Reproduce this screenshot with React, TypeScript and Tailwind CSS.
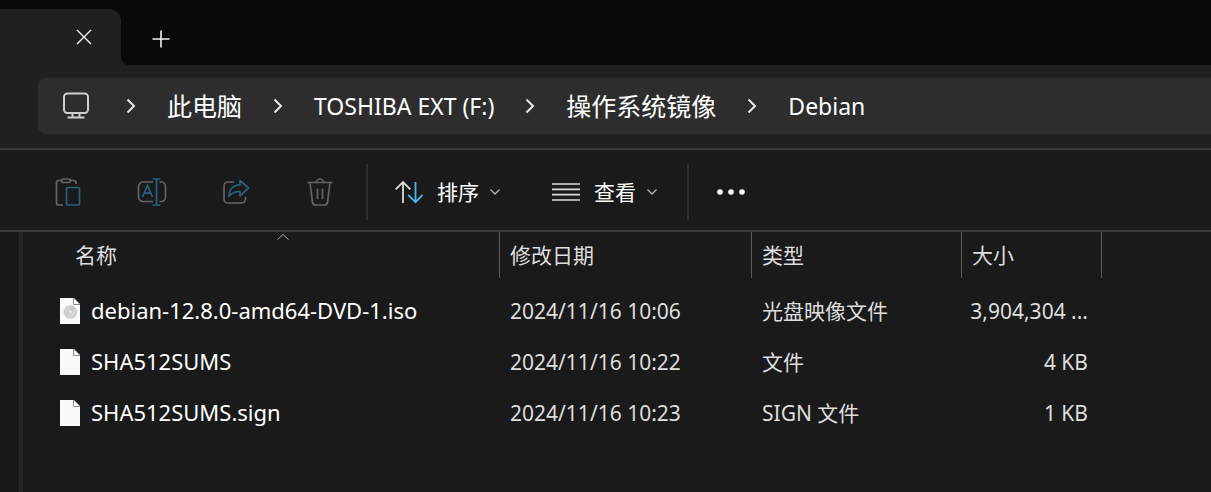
import type { ReactNode } from "react";

const LATIN_CJK = "font-['Noto_Sans','Noto_Sans_CJK_SC',sans-serif]";

function CloseIcon() {
  return (
    <svg width="16" height="16" viewBox="0 0 16 16" fill="none" stroke="#f5f5f5" strokeWidth="1.4">
      <path d="M1 1 15 15M15 1 1 15" />
    </svg>
  );
}

function PlusIcon() {
  return (
    <svg width="18" height="18" viewBox="0 0 18 18" fill="none" stroke="#f0f0f0" strokeWidth="1.6">
      <path d="M9 0.5V17.5M0.5 9H17.5" />
    </svg>
  );
}

function MonitorIcon() {
  return (
    <svg width="28" height="28" viewBox="0 0 28 28" fill="none" stroke="#cfcfcf" strokeWidth="2">
      <rect x="2" y="1.5" width="24" height="19.5" rx="3.5" />
      <path d="M10.5 21V25.5M17.5 21V25.5M5.5 25.5H22.5" />
    </svg>
  );
}

function ChevronRight() {
  return (
    <svg className="shrink-0" width="10" height="16" viewBox="0 0 10 16" fill="none" stroke="#e8e8e8" strokeWidth="2">
      <path d="M1.5 1.5 8 8 1.5 14.5" />
    </svg>
  );
}

function ChevronDown() {
  return (
    <svg width="10" height="6" viewBox="0 0 10 6" fill="none" stroke="#b4b4b4" strokeWidth="1.3">
      <path d="M0.5 0.5 5 5 9.5 0.5" />
    </svg>
  );
}

function PasteIcon() {
  return (
    <svg width="28" height="30" viewBox="0 0 28 30" fill="none" strokeWidth="1.7">
      <path d="M9 28H4.500A2 2 0 0 1 2.500 26V5.500A2 2 0 0 1 4.500 3.500H7.500M16.500 3.500H20A2 2 0 0 1 22 5.500V7" stroke="#656565" />
      <rect x="7.5" y="2" width="9" height="3.5" rx="1.7" stroke="#656565" />
      <rect x="12.5" y="10.5" width="13" height="17.5" rx="1.5" stroke="#28627f" />
    </svg>
  );
}

function RenameIcon() {
  return (
    <svg width="30" height="30" viewBox="0 0 30 30" fill="none" strokeWidth="1.7">
      <path d="M16 24.500H6A4.500 4.500 0 0 1 1.500 20V9.500A4.500 4.500 0 0 1 6 5H16M22.500 5H24A4.500 4.500 0 0 1 28.500 9.500V20A4.500 4.500 0 0 1 24 24.500H22.500" stroke="#656565" />
      <path d="M15.500 2H23.500M15.500 28H23.500M19.500 2V28" stroke="#28627f" />
      <path d="M5.500 20 10.500 8.500 15.500 20M7.200 16.200H13.800" stroke="#28627f" />
    </svg>
  );
}

function ShareIcon() {
  return (
    <svg width="28" height="30" viewBox="0 0 28 30" fill="none" strokeWidth="1.7" strokeLinejoin="round">
      <path d="M12 5H6A4 4 0 0 0 2 9V22A4 4 0 0 0 6 26H19.500A4 4 0 0 0 23.500 22V20" stroke="#656565" />
      <path d="M18 3.500 26.500 11 18 18.800V14.500C12.500 14.500 9.500 16 7 19.500C7 12.500 11 8 18 7.800Z" stroke="#28627f" />
    </svg>
  );
}

function TrashIcon() {
  return (
    <svg width="28" height="30" viewBox="0 0 28 30" fill="none" stroke="#656565" strokeWidth="1.7">
      <path d="M1.500 5.500H26.500M10.500 5.500A3.500 3.500 0 0 1 17.500 5.500M4 5.500 6.500 25.500A3 3 0 0 0 9.400 28H18.600A3 3 0 0 0 21.500 25.500L24 5.500M11.500 11.500V22M16.500 11.500V22" />
    </svg>
  );
}

function SortIcon() {
  return (
    <svg width="28" height="24" viewBox="0 0 28 24" fill="none" strokeWidth="1.8">
      <path d="M8 23V2M0.700 9.300 8 2 15.300 9.300" stroke="#dcdcdc" />
      <path d="M20.500 2V22M13.200 14.900 20.500 22.200 27.500 14.900" stroke="#4cb4ee" />
    </svg>
  );
}

function LinesIcon() {
  return (
    <svg width="28" height="20" viewBox="0 0 28 20" fill="none" stroke="#dcdcdc" strokeWidth="1.7">
      <path d="M0 2H28M0 7.300H28M0 12.700H28M0 18H28" />
    </svg>
  );
}

function DotsIcon() {
  return (
    <svg width="28" height="6" viewBox="0 0 28 6" fill="#ffffff">
      <circle cx="3" cy="3" r="2.8" />
      <circle cx="14" cy="3" r="2.8" />
      <circle cx="25" cy="3" r="2.8" />
    </svg>
  );
}

function FileIcon({ disc }: { disc: boolean }) {
  return (
    <svg className="shrink-0" width="20" height="26" viewBox="0 0 20 26">
      <defs>
        <linearGradient id="disc-sheen" x1="0" y1="0" x2="1" y2="1">
          <stop offset="0" stopColor="#dfe3e2" />
          <stop offset="0.45" stopColor="#c6cbca" />
          <stop offset="0.7" stopColor="#d6dcda" />
          <stop offset="1" stopColor="#a9afad" />
        </linearGradient>
      </defs>
      <path d="M0 0H14L20 6V26H0Z" fill="#fafafa" />
      <path d="M13.500 0V6.500H20" fill="#ffffff" stroke="#8c8c8c" strokeWidth="1" />
      <path d="M14.200 0H20V5.800Z" fill="#1a1a1a" />
      <path d="M13.500 0 20 6.500" stroke="#a8a8a8" strokeWidth="0.8" />
      {disc && (
        <>
          <circle cx="10.3" cy="14" r="6.3" fill="url(#disc-sheen)" stroke="#b4b9b8" strokeWidth="0.6" />
          <circle cx="10.3" cy="13.800" r="1.6" fill="#e6e9e8" />
        </>
      )}
    </svg>
  );
}

function ToolButton({ label, children }: { label: string; children: ReactNode }) {
  return (
    <button type="button" disabled aria-label={label} className="flex h-14 w-[84px] items-center justify-center">
      {children}
    </button>
  );
}

const crumbs = [
  { label: "此电脑", size: "text-[25px]" },
  { label: "TOSHIBA EXT (F:)", size: "text-[23px]" },
  { label: "操作系统镜像", size: "text-[25px]" },
  { label: "Debian", size: "text-[23px]" },
];

const files = [
  { name: "debian-12.8.0-amd64-DVD-1.iso", date: "2024/11/16 10:06", type: "光盘映像文件", size: "3,904,304 ...", disc: true },
  { name: "SHA512SUMS", date: "2024/11/16 10:22", type: "文件", size: "4 KB", disc: false },
  { name: "SHA512SUMS.sign", date: "2024/11/16 10:23", type: "SIGN 文件", size: "1 KB", disc: false },
];

export default function App() {
  return (
    <div className={`flex min-h-screen flex-col bg-[#1a1a1a] text-white ${LATIN_CJK}`}>
      <header className="flex items-end bg-[#0a0a0a] pt-[9px]">
        <div className="relative flex h-14 w-[121px] items-center rounded-tr-xl bg-[#202020] pl-[76px]">
          <button type="button" aria-label="关闭标签页">
            <CloseIcon />
          </button>
          <svg className="absolute bottom-0 left-full" width="8" height="8" viewBox="0 0 8 8" fill="#202020">
            <path d="M0 0A8 8 0 0 0 8 8H0Z" />
          </svg>
        </div>
        <button type="button" aria-label="新建标签页" className="ml-[31px] flex h-14 items-center pt-1">
          <PlusIcon />
        </button>
      </header>

      <nav aria-label="地址栏" className="border-b-2 border-[#393939] bg-[#202020] pt-[13px] pb-3.5 pl-[38px]">
        <ol className="flex h-14 items-center gap-[31px] rounded-l-lg bg-[#2d2d2d] pl-6 leading-8">
          <li className="w-[33px]">
            <a href="#computer" aria-label="此电脑" className="block">
              <MonitorIcon />
            </a>
          </li>
          {crumbs.map((crumb) => (
            <li key={crumb.label} className="flex items-center gap-[31px] whitespace-nowrap">
              <ChevronRight />
              <a href="#folder" className={crumb.size}>{crumb.label}</a>
            </li>
          ))}
        </ol>
      </nav>

      <div role="toolbar" aria-label="工具栏" className="flex h-[82px] items-center border-b-2 border-[#393939] pt-1 pl-[26px] text-[21px]">
        <ToolButton label="粘贴"><PasteIcon /></ToolButton>
        <ToolButton label="重命名"><RenameIcon /></ToolButton>
        <ToolButton label="共享"><ShareIcon /></ToolButton>
        <ToolButton label="删除"><TrashIcon /></ToolButton>
        <div className="ml-1 h-14 w-0.5 bg-[#2d2d2d]" />
        <button type="button" className="ml-[27px] flex items-center">
          <SortIcon />
          <span className="ml-3.5 pt-0.5">排序</span>
          <span className="ml-[11px]"><ChevronDown /></span>
        </button>
        <button type="button" className="ml-[52px] flex items-center">
          <LinesIcon />
          <span className="ml-3.5 pt-0.5">查看</span>
          <span className="ml-[11px]"><ChevronDown /></span>
        </button>
        <div className="ml-[30px] h-14 w-0.5 bg-[#2d2d2d]" />
        <button type="button" aria-label="更多" className="ml-7 py-4">
          <DotsIcon />
        </button>
      </div>

      <div className="flex flex-1">
        <aside className="w-[23px] shrink-0 border-r-4 border-[#262626] bg-[#181818]" />
        <main className="min-w-0 flex-1">
          <table className="table-fixed border-separate border-spacing-0 text-left text-[21px] text-[#dedede]">
            <colgroup>
              <col className="w-[477px]" />
              <col className="w-[252px]" />
              <col className="w-[210px]" />
              <col className="w-[140px]" />
            </colgroup>
            <thead>
              <tr className="h-[46px]">
                <th className="relative border-r border-[#5c5c5c] p-0 pt-0.5 pl-[52px] font-normal">
                  名称
                  <svg className="absolute top-0.5 left-[254px]" width="12" height="6" viewBox="0 0 12 6" fill="none" stroke="#a8a8a8">
                    <path d="M0.5 5.5 6 0.5 11.5 5.5" />
                  </svg>
                </th>
                <th className="border-r border-[#5c5c5c] p-0 pt-0.5 pl-2.5 font-normal">修改日期</th>
                <th className="border-r border-[#5c5c5c] p-0 pt-0.5 pl-2.5 font-normal">类型</th>
                <th className="border-r border-[#5c5c5c] p-0 pt-0.5 pl-2.5 font-normal">大小</th>
              </tr>
            </thead>
            <tbody className="before:block before:h-2">
              {files.map((file) => (
                <tr key={file.name} className="h-[51px] whitespace-nowrap">
                  <td className="p-0 pb-0.5 pl-[37px] text-[22px] text-white">
                    <span className="flex items-center gap-[11px]">
                      <FileIcon disc={file.disc} />
                      {file.name}
                    </span>
                  </td>
                  <td className="p-0 pl-2.5">{file.date}</td>
                  <td className="p-0 pl-2.5">{file.type}</td>
                  <td className="p-0 pr-3.5 text-right">{file.size}</td>
                </tr>
              ))}
            </tbody>
          </table>
        </main>
      </div>
    </div>
  );
}
